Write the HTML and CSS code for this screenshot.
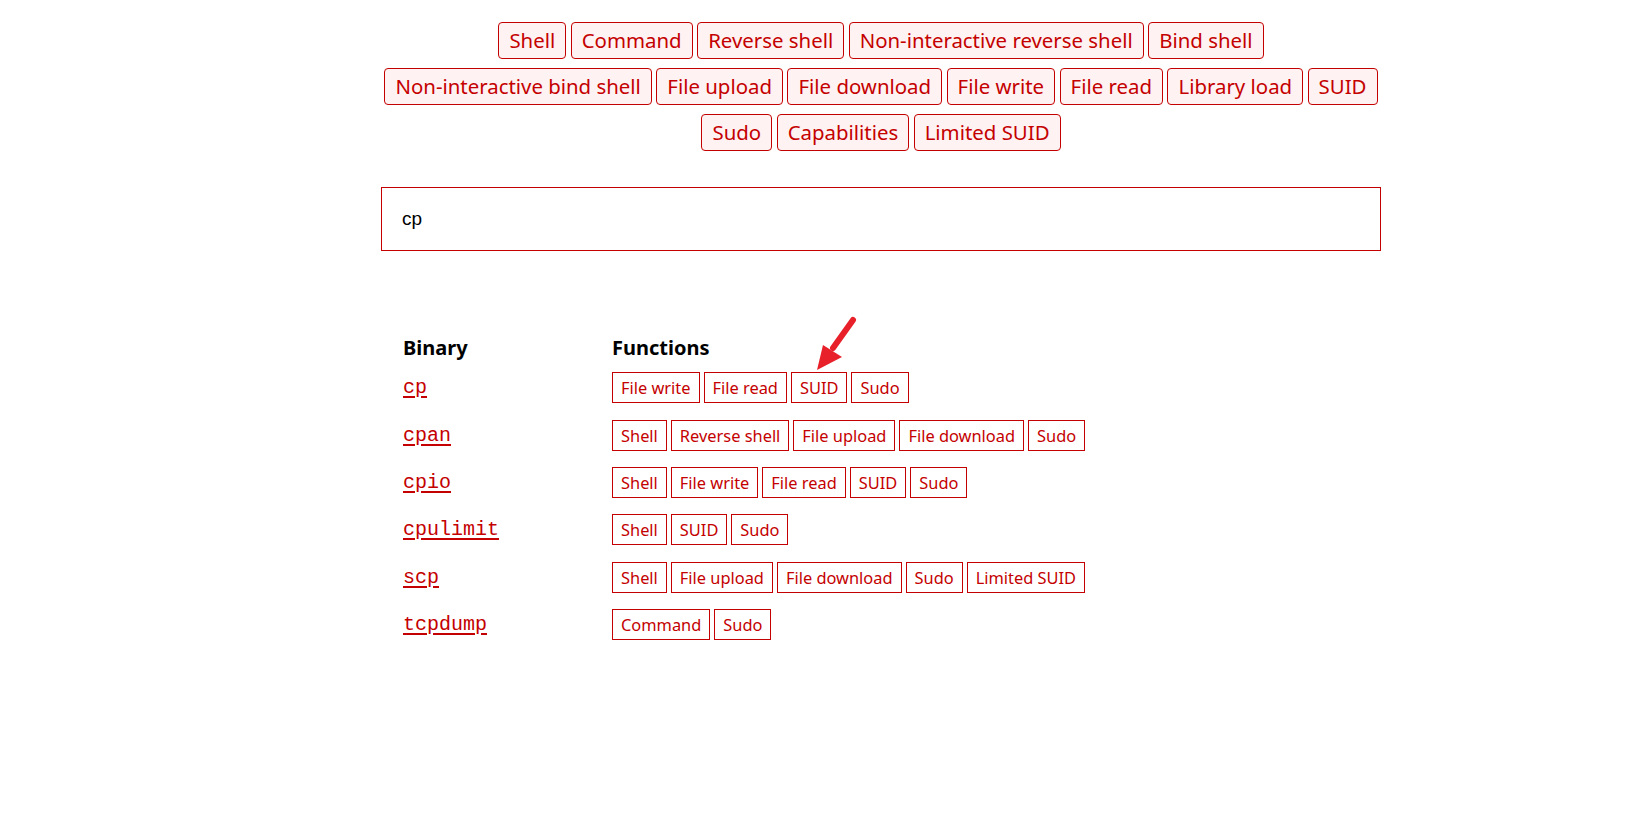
FILE: index.html
```html
<!DOCTYPE html>
<html lang="en">
<head>
<meta charset="utf-8">
<title>GTFOBins</title>
<link rel="stylesheet" href="styles.css">
</head>
<body>
<div class="page">
  <div class="filters">
    <span class="filter">Shell</span>
    <span class="filter">Command</span>
    <span class="filter">Reverse shell</span>
    <span class="filter">Non-interactive reverse shell</span>
    <span class="filter">Bind shell</span>
    <span class="filter">Non-interactive bind shell</span>
    <span class="filter">File upload</span>
    <span class="filter">File download</span>
    <span class="filter">File write</span>
    <span class="filter">File read</span>
    <span class="filter">Library load</span>
    <span class="filter">SUID</span>
    <span class="filter">Sudo</span>
    <span class="filter">Capabilities</span>
    <span class="filter">Limited SUID</span>
  </div>

  <div class="search"><span class="search-text">cp</span></div>

  <div class="results">
    <div class="head">Binary</div>
    <div class="head">Functions</div>

    <div class="bin"><a href="#">cp</a></div>
    <div class="funcs"><span class="fn">File write</span><span class="fn">File read</span><span class="fn">SUID</span><span class="fn">Sudo</span></div>

    <div class="bin"><a href="#">cpan</a></div>
    <div class="funcs"><span class="fn">Shell</span><span class="fn">Reverse shell</span><span class="fn">File upload</span><span class="fn">File download</span><span class="fn">Sudo</span></div>

    <div class="bin"><a href="#">cpio</a></div>
    <div class="funcs"><span class="fn">Shell</span><span class="fn">File write</span><span class="fn">File read</span><span class="fn">SUID</span><span class="fn">Sudo</span></div>

    <div class="bin"><a href="#">cpulimit</a></div>
    <div class="funcs"><span class="fn">Shell</span><span class="fn">SUID</span><span class="fn">Sudo</span></div>

    <div class="bin"><a href="#">scp</a></div>
    <div class="funcs"><span class="fn">Shell</span><span class="fn">File upload</span><span class="fn">File download</span><span class="fn">Sudo</span><span class="fn">Limited SUID</span></div>

    <div class="bin"><a href="#">tcpdump</a></div>
    <div class="funcs"><span class="fn">Command</span><span class="fn">Sudo</span></div>
  </div>

  <svg class="arrow" width="60" height="70" viewBox="0 0 60 70">
    <line x1="45" y1="7" x2="25" y2="35" stroke="#e8202a" stroke-width="6" stroke-linecap="round"/>
    <polygon points="9,57 15,32 34,44" fill="#e8202a"/>
  </svg>
</div>
</body>
</html>
```

FILE: styles.css
```css
html, body {
  margin: 0;
  padding: 0;
  background: #ffffff;
}

.page {
  position: relative;
  width: 1000px;
  margin-left: 381px;
  padding-top: 22px;
  font-family: "Noto Sans", "Open Sans", sans-serif;
}

.filters {
  display: flex;
  flex-wrap: wrap;
  justify-content: center;
  gap: 9px 4.5px;
  margin: 0 -4px;
}

.filter {
  display: inline-block;
  height: 35px;
  line-height: 35px;
  padding: 0 10px;
  border: 1px solid #c40000;
  border-radius: 4px;
  background: #fff2f2;
  color: #c40000;
  font-size: 20.4px;
  white-space: nowrap;
}

.search {
  margin-top: 36px;
  height: 62px;
  border: 1px solid #c40000;
  display: flex;
  align-items: center;
  padding: 0 20px;
}

.search-text {
  font-family: "Liberation Sans", Arial, sans-serif;
  font-size: 19px;
  color: #000;
}

.results {
  margin-top: 81px;
  padding-left: 22px;
  display: grid;
  grid-template-columns: 209px auto;
  grid-auto-rows: 47.4px;
  grid-template-rows: 32px;
}

.head {
  font-weight: bold;
  font-size: 20px;
  line-height: 32px;
  color: #000;
}

.bin {
  display: flex;
  align-items: center;
}

.bin a {
  font-family: "Liberation Mono", "Courier New", monospace;
  font-size: 20px;
  color: #c40000;
  text-decoration: underline;
  text-decoration-thickness: 2px;
  text-underline-offset: 3px;
}

.funcs {
  display: flex;
  align-items: center;
  gap: 4px;
}

.fn {
  display: inline-block;
  height: 29px;
  line-height: 29px;
  padding: 0 8px;
  border: 1px solid #c40000;
  color: #c40000;
  font-size: 16.4px;
  white-space: nowrap;
}

.arrow {
  position: absolute;
  left: 427px;
  top: 313px;
}
```
